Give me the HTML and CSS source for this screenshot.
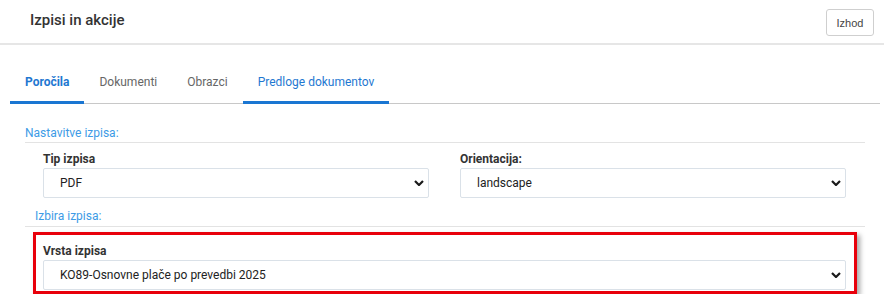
FILE: index.html
```html
<!DOCTYPE html>
<html lang="sl">
<head>
<meta charset="utf-8">
<title>Izpisi in akcije</title>
<link rel="stylesheet" href="styles.css">
</head>
<body>
<header class="header">
  <h1 class="title">Izpisi in akcije</h1>
  <button class="btn-exit" type="button">Izhod</button>
</header>

<nav class="tabs">
  <a class="tab active">Poročila</a>
  <a class="tab">Dokumenti</a>
  <a class="tab">Obrazci</a>
  <a class="tab active-light">Predloge dokumentov</a>
</nav>

<section class="fieldset">
  <div class="legend">Nastavitve izpisa:</div>
  <div class="grid">
    <div class="field">
      <label class="label">Tip izpisa</label>
      <div class="select"><span>PDF</span><svg class="chev" viewBox="0 0 10 6" width="10" height="6"><path d="M1 1l4 4 4-4" fill="none" stroke="#1a1a1a" stroke-width="2.2"/></svg></div>
    </div>
    <div class="field">
      <label class="label">Orientacija:</label>
      <div class="select"><span>landscape</span><svg class="chev" viewBox="0 0 10 6" width="10" height="6"><path d="M1 1l4 4 4-4" fill="none" stroke="#1a1a1a" stroke-width="2.2"/></svg></div>
    </div>
  </div>

  <div class="legend legend-indent">Izbira izpisa:</div>
  <div class="highlight">
    <label class="label">Vrsta izpisa</label>
    <div class="select"><span>KO89-Osnovne plače po prevedbi 2025</span><svg class="chev" viewBox="0 0 10 6" width="10" height="6"><path d="M1 1l4 4 4-4" fill="none" stroke="#1a1a1a" stroke-width="2.2"/></svg></div>
  </div>
</section>
</body>
</html>
```

FILE: styles.css
```css
* { box-sizing: border-box; }

body {
  margin: 0;
  font-family: Roboto, "Noto Sans", "Liberation Sans", sans-serif;
  color: #333;
  background: #fff;
  width: 884px;
}

.header {
  display: flex;
  justify-content: space-between;
  align-items: flex-start;
  height: 45px;
  padding: 0 10px 0 30px;
  border-bottom: 2px solid #e6e6e6;
}

.title {
  margin: 10px 0 0;
  font-size: 15px;
  line-height: 20px;
  font-weight: 500;
  color: #333;
}

.btn-exit {
  margin-top: 9px;
  width: 48px;
  height: 27px;
  padding: 0;
  border: 1px solid #cfcfcf;
  border-radius: 3px;
  background: #fff;
  font-family: "Liberation Sans", Arial, sans-serif;
  font-size: 11px;
  color: #444;
}

.tabs {
  display: flex;
  margin: 19px 4px 0 10px;
  border-bottom: 1px solid #c8c8c8;
}

.tab {
  display: block;
  padding: 10px 15px 10px;
  font-size: 12px;
  line-height: 17px;
  color: #666;
  border-bottom: 3px solid transparent;
  margin-bottom: -1px;
}

.tab.active {
  color: #1f78d1;
  font-weight: 700;
  border-bottom-color: #1a76d2;
}

.tab.active-light {
  color: #1f78d1;
  border-bottom-color: #1a76d2;
}

.fieldset {
  margin: 21px 19px 0 25px;
}

.legend {
  font-size: 12px;
  line-height: 16px;
  color: #3d9be6;
  padding-bottom: 1px;
  border-bottom: 1px solid #e3e3e3;
}

.legend-indent {
  margin-top: 10px;
  padding-left: 10px;
  padding-bottom: 2px;
}

.grid {
  display: grid;
  grid-template-columns: 1fr 1fr;
  column-gap: 31px;
  padding: 8px 19px 0 18px;
}

.label {
  display: block;
  font-size: 12px;
  line-height: 16px;
  font-weight: 700;
  color: #333;
  margin-bottom: 1px;
}

.select {
  display: flex;
  align-items: center;
  justify-content: space-between;
  height: 30px;
  padding: 0 4px 0 16px;
  border: 1px solid #dae1e8;
  border-radius: 2px;
  background: #fff;
  font-size: 12px;
  color: #222;
}

.chev { display: block; }

.highlight {
  margin: 5px 8px 0 8px;
  border: 3px solid #e8000b;
  padding: 8px 8px 1px 7px;
  box-shadow: 3px 3px 5px rgba(0, 0, 0, 0.35);
}
```
